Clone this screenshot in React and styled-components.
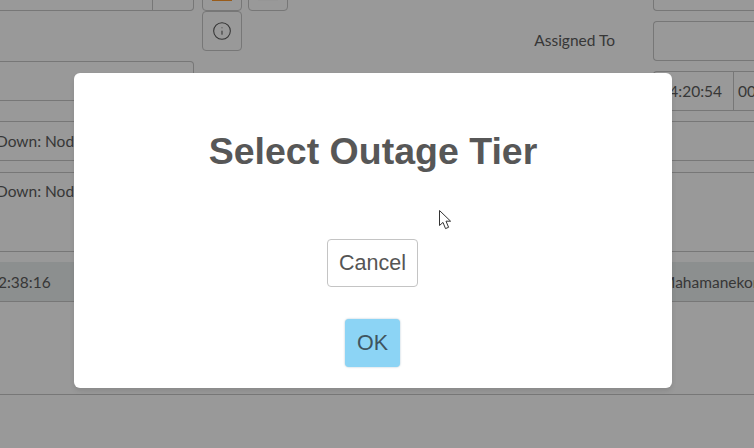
import React from 'react';
import styled, { createGlobalStyle } from 'styled-components';
import { Info } from 'lucide-react';

const Global = createGlobalStyle`
  html, body { margin: 0; padding: 0; background: #fff; }
  body { font-family: Lato, "Noto Sans", "Liberation Sans", sans-serif; }
`;

const Page = styled.div`
  position: relative;
  width: 754px;
  height: 448px;
  overflow: hidden;
  color: #5c5c5c;
  font-size: 15.5px;
  background: #fff;
`;
const Content = styled.div`
  margin-top: -29px;
  display: flex;
  flex-direction: column;
`;
const Form = styled.div`
  display: flex;
  height: 150px;
`;
const LeftFields = styled.div`
  width: 194px;
  display: flex;
  flex-direction: column;
  gap: 50px;
`;
const InputGroup = styled.div`
  height: 40px;
  box-sizing: border-box;
  border: 1px solid #c6c6c6;
  border-left: none;
  border-radius: 0 4px 4px 0;
  display: flex;
  justify-content: flex-end;
`;
const Addon = styled.div`
  width: 40px;
  border-left: 1px solid #c6c6c6;
`;
const Tools = styled.div`
  margin-left: 8px;
  display: grid;
  grid-template-columns: 40px 40px;
  grid-auto-rows: 40px;
  column-gap: 6px;
`;
const ToolButton = styled.div`
  box-sizing: border-box;
  border: 1px solid #c6c6c6;
  border-radius: 4px;
  display: flex;
  align-items: center;
  justify-content: center;
  color: #555;
`;
const Swatch = styled.span`
  width: 20px;
  height: 20px;
  background: ${p => p.$color};
`;
const RightFields = styled.div`
  margin-left: auto;
  display: flex;
  flex-direction: column;
  gap: 10px;
`;
const FieldRow = styled.div`
  height: 40px;
  display: flex;
  align-items: center;
  justify-content: flex-end;
`;
const Label = styled.span`
  margin: 0 38px 2px 0;
  white-space: nowrap;
`;
const FieldInput = styled.div`
  width: 101px;
  height: 40px;
  box-sizing: border-box;
  border: 1px solid #c6c6c6;
  border-right: none;
  border-radius: 4px 0 0 4px;
`;
const TimeGroup = styled.div`
  width: 101px;
  height: 40px;
  box-sizing: border-box;
  border: 1px solid #c6c6c6;
  border-right: none;
  border-radius: 4px 0 0 4px;
  display: flex;
  align-items: center;
  white-space: nowrap;
  overflow: hidden;
`;
const TimeCell = styled.div`
  flex: none;
  width: 80px;
  height: 100%;
  box-sizing: border-box;
  padding-right: 11px;
  display: flex;
  align-items: center;
  justify-content: flex-end;
  border-right: 1px solid #c6c6c6;
`;
const TimeRest = styled.div`
  padding-left: 4px;
`;
const Table = styled.div`
  display: flex;
  flex-direction: column;
`;
const Row = styled.div`
  height: ${p => p.$h}px;
  box-sizing: border-box;
  ${p => p.$top ? 'border-top: 1px solid #c6c6c6;' : ''}
  ${p => p.$bottom ? 'border-bottom: 1px solid #c6c6c6;' : ''}
  background: ${p => p.$shaded ? '#eaeeee' : 'transparent'};
  display: flex;
  justify-content: space-between;
  padding-top: ${p => p.$pad || 0}px;
  white-space: nowrap;
  overflow: hidden;
`;
const Cell = styled.span`
  margin-left: ${p => p.$shift}px;
`;
const OwnerCell = styled.span`
  width: 93px;
  flex: none;
`;

const Overlay = styled.div`
  position: absolute;
  inset: 0;
  background: rgba(0, 0, 0, 0.4);
  display: flex;
  align-items: flex-start;
  padding: 73px 0 0 74px;
`;
const Modal = styled.div`
  width: 598px;
  height: 315px;
  box-sizing: border-box;
  background: #fff;
  border-radius: 6px;
  box-shadow: 0 3px 5px rgba(0, 0, 0, 0.1);
  padding-top: 56px;
  display: flex;
  flex-direction: column;
  align-items: center;
  font-family: "Liberation Sans", Arial, sans-serif;
`;
const Title = styled.h2`
  margin: 0 0 66px;
  font-size: 37.5px;
  line-height: 44px;
  font-weight: 700;
  color: #575757;
`;
const Cancel = styled.button`
  width: 91px;
  height: 48px;
  padding: 0;
  background: #fff;
  border: 1px solid #c4c4c4;
  border-radius: 4px;
  font: 21.5px "Liberation Sans", Arial, sans-serif;
  color: #555;
  margin: 0 1px 32px 0;
`;
const Ok = styled.button`
  width: 55px;
  height: 48px;
  padding: 0;
  background: #8cd4f5;
  border: none;
  border-radius: 4px;
  box-shadow: 0 0 2px rgba(110, 150, 170, 0.6);
  font: 21.5px "Liberation Sans", Arial, sans-serif;
  color: #3f5560;
  margin-right: 1px;
`;
const Pointer = styled.svg`
  position: absolute;
  left: 438px;
  top: 209px;
`;

export default function App() {
  return (
    <Page>
      <Global />
      <Content>
        <Form>
          <LeftFields>
            <InputGroup><Addon /></InputGroup>
            <InputGroup />
          </LeftFields>
          <Tools>
            <ToolButton><Swatch $color="#ff9a2e" /></ToolButton>
            <ToolButton><Swatch $color="#fafafa" /></ToolButton>
            <ToolButton><Info size={20} strokeWidth={1.25} /></ToolButton>
          </Tools>
          <RightFields>
            <FieldRow>
              <Label>Assigned Technician</Label>
              <FieldInput />
            </FieldRow>
            <FieldRow>
              <Label>Assigned To</Label>
              <FieldInput />
            </FieldRow>
            <FieldRow>
              <TimeGroup>
                <TimeCell>04:20:54</TimeCell>
                <TimeRest>00:00:00</TimeRest>
              </TimeGroup>
            </FieldRow>
          </RightFields>
        </Form>
        <Table>
          <Row $h={40} $pad={10} $top $bottom><Cell $shift={-4}>Down: Node</Cell></Row>
          <Row $h={11} />
          <Row $h={80} $pad={9} $top $bottom><Cell $shift={-4}>Down: Node</Cell></Row>
          <Row $h={10} />
          <Row $h={40} $pad={11} $shaded $bottom>
            <Cell $shift={-2}>2:38:16</Cell>
            <OwnerCell>Mahamanekon</OwnerCell>
          </Row>
          <Row $h={93} $bottom />
        </Table>
      </Content>
      <Overlay>
        <Modal>
          <Title>Select Outage Tier</Title>
          <Cancel>Cancel</Cancel>
          <Ok>OK</Ok>
        </Modal>
        <Pointer width="15" height="22" viewBox="0 0 15 22">
          <path d="M1.5 1.5V16.5L5 13.4L7.5 19.6L10.6 18.3L8 12.2H12.6Z" fill="#fff" stroke="#333" strokeWidth="1" />
        </Pointer>
      </Overlay>
    </Page>
  );
}
